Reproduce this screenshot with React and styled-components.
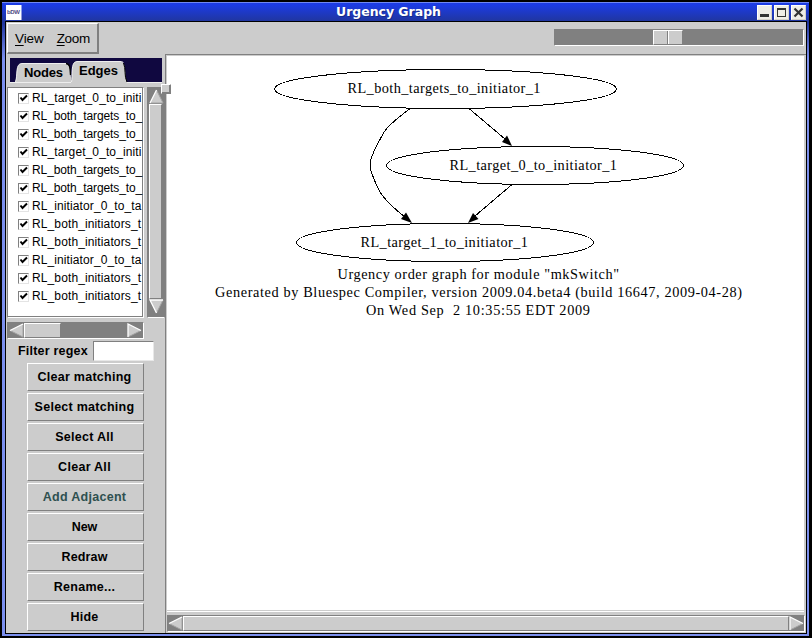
import React from 'react';
import styled, { createGlobalStyle, css } from 'styled-components';

const GlobalStyle = createGlobalStyle`
  * { box-sizing: border-box; }
  html, body { margin: 0; padding: 0; background: #000; overflow: hidden; }
`;

const face = '#cccccc';
const shade = '#808080';

const raised = css`
  background: ${face};
  border: 1px solid;
  border-color: #fff ${shade} ${shade} #fff;
`;
const sunken = css`
  border: 1px solid;
  border-color: ${shade} #fff #fff ${shade};
`;

const Desktop = styled.div`
  width: 812px;
  height: 638px;
  padding: 2px 3px 2px 2px;
  background: #000;
`;
const Frame = styled.div`
  display: flex;
  flex-direction: column;
  height: 634px;
  padding: 1px 3px 3px;
  background: linear-gradient(#1c3ce4 0, #20359f 16px, #20359f 20px, #7b8fee 56px, #7b8fee 100%);
  border-top: 1px solid #7088f4;
`;
const TitleBar = styled.header`
  display: flex;
  align-items: center;
  flex: none;
  height: 17px;
  margin: 0 -2px;
  padding: 0 0 0 3px;
  background: linear-gradient(#1c3ce8, #2036a0);
`;
const Title = styled.h1`
  flex: 1;
  margin: 0 0 1px;
  padding-right: 2px;
  text-align: center;
  color: #fff;
  font: bold 12.5px/16px "DejaVu Sans", sans-serif;
  letter-spacing: -0.03px;
  text-shadow: 1px 1px 0 #162c88;
`;
const WindowButtons = styled.div`
  display: flex;
  gap: 2px;
  padding-right: 2px;
`;
const WindowButton = styled.button`
  width: 15px;
  height: 15px;
  padding: 0;
  border: 1px solid;
  border-color: #fff #d4d0c8 #d4d0c8 #fff;
  background: #efede6;
  svg { display: block; }
`;
const Content = styled.main`
  display: flex;
  flex-direction: column;
  flex: 1;
  min-height: 0;
  margin: 0 -1px -1px 0;
  border: 1px solid #000;
  background: ${face};
`;
const Toolbar = styled.div`
  display: flex;
  justify-content: space-between;
  flex: none;
  height: 32px;
  padding: 1px 2px 0 1px;
`;
const MenuBar = styled.nav`
  display: flex;
  align-items: center;
  gap: 13px;
  width: 92px;
  height: 31px;
  padding: 1px 7px 0;
  ${raised}
  border-right-width: 2px;
  border-bottom-width: 2px;
`;
const MenuItem = styled.span`
  font: 13.5px "Liberation Sans", sans-serif;
  letter-spacing: ${p => p.$spacing}px;
  white-space: nowrap;
  u { text-underline-offset: 2px; }
`;
const ZoomSlider = styled.div`
  width: 250px;
  height: 17px;
  margin-top: 6px;
  padding-left: 98px;
  background: ${shade};
  ${sunken}
`;
const SliderThumb = styled.div`
  display: flex;
  width: 30px;
  height: 15px;
  ${raised}
  &::before {
    content: "";
    width: 14px;
    border-right: 1px solid #fff;
    box-shadow: inset -1px 0 ${shade};
  }
`;
const Body = styled.div`
  display: flex;
  flex: 1;
  min-height: 0;
`;
const Sidebar = styled.aside`
  display: flex;
  flex-direction: column;
  flex: none;
  width: 159px;
  padding: 4px 0 0 1px;
`;
const TabStrip = styled.div`
  flex: none;
  width: 152px;
  height: 25px;
  margin-left: 3px;
  background: #100840;
  border-bottom: 1px solid #eee;
  svg { display: block; }
  text { font: bold 13px "Liberation Sans", sans-serif; }
`;
const ListArea = styled.div`
  display: flex;
  justify-content: space-between;
  flex: none;
  height: 231px;
  margin-top: 4px;
`;
const List = styled.div`
  width: 137px;
  padding: 1px 0 0 10px;
  background: #fff;
  ${sunken}
  box-shadow: inset -1px -1px ${shade};
`;
const ListRow = styled.div`
  display: flex;
  align-items: center;
  gap: 3px;
  height: 18px;
  white-space: nowrap;
  font: 12px/18px "Liberation Sans", sans-serif;
  letter-spacing: ${p => p.$spacing}px;
`;
const Check = styled.svg`
  flex: none;
  width: 11px;
  height: 11px;
  margin-top: 1px;
  background: #fff;
  border: 1px solid;
  border-color: ${shade} #e4e4e4 #e4e4e4 ${shade};
`;
const ScrollBar = styled.div`
  display: flex;
  flex: none;
  flex-direction: ${p => (p.$vertical ? 'column' : 'row')};
  width: ${p => p.$width}px;
  height: ${p => p.$height}px;
  padding: ${p => p.$pad};
  background: ${shade};
  border: 1px solid;
  border-color: ${shade} ${p => (p.$vertical ? shade : '#fff')} #fff ${shade};
  svg { display: block; flex: none; }
`;
const ScrollThumb = styled.div`
  width: ${p => p.$width}px;
  height: ${p => p.$height}px;
  ${raised}
`;
const Spacer = styled.div`
  flex: 1;
`;
const HorizontalArea = styled.div`
  margin-top: 4px;
`;
const FilterRow = styled.label`
  display: flex;
  align-items: center;
  height: 20px;
  margin: 2px 0 2px 11px;
  font: bold 12.5px "Liberation Sans", sans-serif;
  letter-spacing: 0.2px;
  white-space: nowrap;
`;
const FilterText = styled.span`
  width: 75px;
`;
const FilterInput = styled.input`
  width: 61px;
  height: 20px;
  padding: 0;
  background: #fff;
  border: 1px solid;
  border-color: ${shade} #e8e8e8 #e8e8e8 ${shade};
  border-radius: 0;
`;
const Actions = styled.div`
  display: grid;
  grid-auto-rows: 28px;
  gap: 2px;
  width: 117px;
  margin-left: 20px;
`;
const ActionButton = styled.button`
  padding: 0 2px 0 0;
  color: ${p => (p.$muted ? '#2f5050' : '#000')};
  font: bold 12.5px "Liberation Sans", sans-serif;
  letter-spacing: ${p => p.$spacing}px;
  ${raised}
`;
const Pane = styled.section`
  position: relative;
  display: flex;
  flex-direction: column;
  flex: 1;
  min-width: 0;
  border-left: 1px solid ${shade};
  border-top: 1px solid ${shade};
`;
const SashHandle = styled.div`
  position: absolute;
  left: -5px;
  top: 29px;
  width: 10px;
  height: 10px;
  ${raised}
  box-shadow: inset -1px -1px ${shade};
`;
const Canvas = styled.div`
  flex: none;
  height: 557px;
  margin-right: 1px;
  background: #fff;
  border: 1px solid ${face};
  border-bottom: 0;
  box-shadow: inset 0 -1px #fff, inset 0 -2px ${face};
  svg { display: block; }
`;
const CanvasScroll = styled.div`
  padding: 3px 0 0 1px;
`;

const arrowShapes = {
  up: { points: '7.5,1 14,14 1,14', light: 'M1 14L7.5 1', dark: 'M7.5 1L14 14H1' },
  down: { points: '1,1 14,1 7.5,14', light: 'M14 1H1L7.5 14', dark: 'M7.5 14L14 1' },
  left: { points: '1,7.5 14,1 14,14', light: 'M14 1L1 7.5', dark: 'M1 7.5L14 14V1' },
  right: { points: '1,1 14,7.5 1,14', light: 'M1 14V1L14 7.5', dark: 'M1 14L14 7.5' },
};

function Arrow({ dir }) {
  const { points, light, dark } = arrowShapes[dir];
  return (
    <svg width="15" height="15" viewBox="0 0 15 15">
      <polygon points={points} fill={face} />
      <path d={dark} fill="none" stroke="#a4a4a4" />
      <path d={light} fill="none" stroke="#fff" strokeWidth="1.3" />
    </svg>
  );
}

const targetZero = ['RL_target_0_to_initi', 0.1];
const bothTargets = ['RL_both_targets_to_', -0.1];
const initiatorZero = ['RL_initiator_0_to_ta', 0.1];
const bothInitiators = ['RL_both_initiators_t', 0.12];

const edges = [
  targetZero, bothTargets, bothTargets,
  targetZero, bothTargets, bothTargets,
  initiatorZero, bothInitiators, bothInitiators,
  initiatorZero, bothInitiators, bothInitiators,
];

const actions = [
  ['Clear matching', 0.26],
  ['Select matching', 0.26],
  ['Select All', 0.28],
  ['Clear All', 0.28],
  ['Add Adjacent', 0.3],
  ['New', 0],
  ['Redraw', 0.15],
  ['Rename...', 0.28],
  ['Hide', 0.2],
];

const nodes = [
  { label: 'RL_both_targets_to_initiator_1', cx: 445.5, cy: 89, rx: 171, ry: 19.5, x: 347.5, y: 93, w: 193 },
  { label: 'RL_target_0_to_initiator_1', cx: 535, cy: 165.5, rx: 148.5, ry: 19, x: 449.5, y: 170, w: 167.5 },
  { label: 'RL_target_1_to_initiator_1', cx: 445, cy: 242.5, rx: 148.5, ry: 19, x: 360.5, y: 247, w: 167.5 },
];

const captions = [
  { text: 'Urgency order graph for module "mkSwitch"', x: 337.5, y: 279, w: 281.5 },
  { text: 'Generated by Bluespec Compiler, version 2009.04.beta4 (build 16647, 2009-04-28)', x: 215, y: 297, w: 527 },
  { text: 'On Wed Sep\u00a0 2 10:35:55 EDT 2009', x: 366, y: 315, w: 224 },
];

function Graph() {
  return (
    <svg width="637" height="554" viewBox="167 56 637 554" fontFamily="'Liberation Serif', serif" fontSize="14.3">
      <g fill="none" stroke="#000" strokeWidth="1" shapeRendering="crispEdges">
        {nodes.map(n => <ellipse key={n.label} cx={n.cx} cy={n.cy} rx={n.rx} ry={n.ry} />)}
        <path d="M410 108.500C402 115 390 123 384 132C379 142 370 155 370 165C370 172 375 182 380 192C386 202 396 210 405 217" />
        <path d="M469 108.500L505 139" />
        <path d="M512 184.500L475 216" />
      </g>
      <g fill="#000">
        <polygon points="412,223 401,219 406,212.500" />
        <polygon points="512,146 502,142 507,135.500" />
        <polygon points="468,223 473,213 478.500,219" />
      </g>
      {nodes.map(n => (
        <text key={n.label} x={n.x} y={n.y} textLength={n.w}>{n.label}</text>
      ))}
      {captions.map(c => (
        <text key={c.text} x={c.x} y={c.y} textLength={c.w}>{c.text}</text>
      ))}
    </svg>
  );
}

function Tabs() {
  return (
    <TabStrip>
      <svg width="152" height="25" viewBox="10 58 152 25">
        <path d="M15 83C18 75 15 63.500 22 63.500H66C71 63.500 70 74 72 83Z" fill={face} />
        <path d="M15.500 82C18 75 15 63.500 22 63.500H66" fill="none" stroke="#eee" />
        <path d="M66 63.500C70 64 70 67 70.500 75" fill="none" stroke="#000" strokeWidth="1.3" />
        <path d="M71 83C73 77 70 61.500 77 61.500H120C127 61.500 124 73 127 83Z" fill={face} />
        <path d="M71.500 82C73 77 70 61.500 77 61.500H120C122 61.500 123 62 123.500 63" fill="none" stroke="#eee" />
        <path d="M123.500 63C126 68 124 77 127 82" fill="none" stroke="#000" />
        <path d="M10 82.500H71M127 82.500H162" stroke="#eee" />
        <text x="24" y="77" textLength="39">Nodes</text>
        <text x="79" y="75" textLength="39">Edges</text>
      </svg>
    </TabStrip>
  );
}

export default function App() {
  return (
    <Desktop>
      <GlobalStyle />
      <Frame>
        <TitleBar>
          <svg width="16" height="15" viewBox="0 0 16 15">
            <rect width="15.500" height="15" fill="#fff" />
            <text x="1" y="9" fontSize="6" fontWeight="bold" fontFamily="Liberation Sans, sans-serif" fill="#514a83" textLength="13">bDW</text>
          </svg>
          <Title>Urgency Graph</Title>
          <WindowButtons>
            <WindowButton aria-label="Minimize"><svg width="13" height="13"><path d="M2 8h9v3H2z" fill="#333" /></svg></WindowButton>
            <WindowButton aria-label="Maximize"><svg width="13" height="13"><path d="M2 2h9v9H2zM3 4v6h7V4z" fillRule="evenodd" fill="#333" /></svg></WindowButton>
            <WindowButton aria-label="Close"><svg width="13" height="13"><path d="M2.500 2.500l8 8m0-8l-8 8" stroke="#333" strokeWidth="2.200" /></svg></WindowButton>
          </WindowButtons>
        </TitleBar>
        <Content>
          <Toolbar>
            <MenuBar>
              <MenuItem $spacing={-0.1}><u>V</u>iew</MenuItem>
              <MenuItem $spacing={-0.3}><u>Z</u>oom</MenuItem>
            </MenuBar>
            <ZoomSlider><SliderThumb /></ZoomSlider>
          </Toolbar>
          <Body>
            <Sidebar>
              <Tabs />
              <ListArea>
                <List>
                  {edges.map(([name, spacing], i) => (
                    <ListRow key={i} $spacing={spacing}>
                      <Check viewBox="0 0 9 9"><path d="M1.500 3.500L3.500 6L8 1.500" fill="none" stroke="#000" strokeWidth="2" /></Check>
                      <span>{name}</span>
                    </ListRow>
                  ))}
                </List>
                <ScrollBar $vertical $width={18} $height={231} $pad="1px">
                  <Arrow dir="up" />
                  <ScrollThumb $width={13} $height={195} />
                  <Arrow dir="down" />
                </ScrollBar>
              </ListArea>
              <HorizontalArea>
                <ScrollBar $width={137} $height={17} $pad="0 1px">
                  <Arrow dir="left" />
                  <ScrollThumb $width={37} $height={15} />
                  <Spacer />
                  <Arrow dir="right" />
                </ScrollBar>
              </HorizontalArea>
              <FilterRow>
                <FilterText>Filter regex</FilterText>
                <FilterInput aria-label="Filter regex" />
              </FilterRow>
              <Actions>
                {actions.map(([label, spacing]) => (
                  <ActionButton key={label} $spacing={spacing} $muted={label === 'Add Adjacent'}>{label}</ActionButton>
                ))}
              </Actions>
            </Sidebar>
            <Pane>
              <Canvas><Graph /></Canvas>
              <CanvasScroll>
                <ScrollBar $width={638} $height={17} $pad="0">
                  <Arrow dir="left" />
                  <ScrollThumb $width={606} $height={15} />
                  <Arrow dir="right" />
                </ScrollBar>
              </CanvasScroll>
              <SashHandle />
            </Pane>
          </Body>
        </Content>
      </Frame>
    </Desktop>
  );
}
